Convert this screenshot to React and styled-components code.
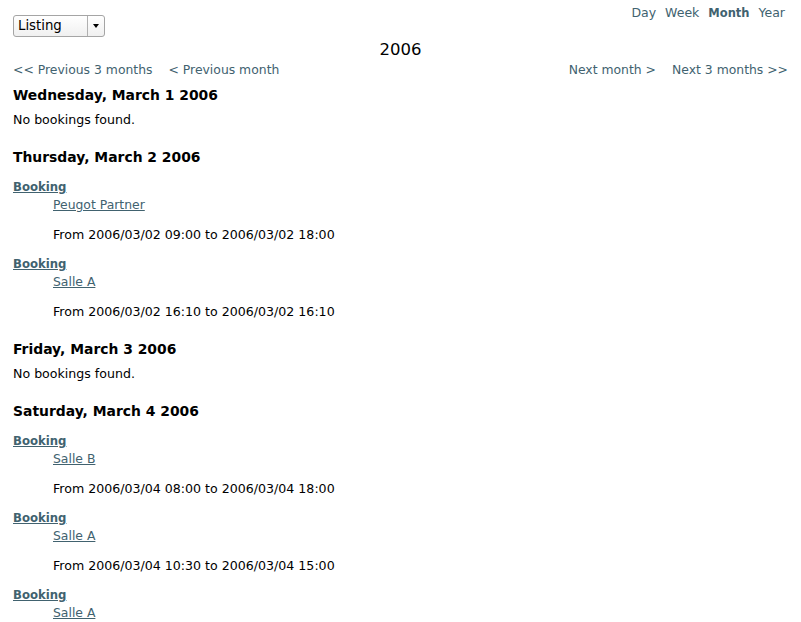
import React from "react";
import styled, { createGlobalStyle } from "styled-components";

const GlobalStyle = createGlobalStyle`
  body {
    margin: 0;
    background: #fff;
    font-family: "DejaVu Sans", Verdana, sans-serif;
    color: #000;
  }
`;

const days = [
  { title: "Wednesday, March 1 2006", bookings: [] },
  {
    title: "Thursday, March 2 2006",
    bookings: [
      { item: "Peugot Partner", from: "2006/03/02 09:00", to: "2006/03/02 18:00" },
      { item: "Salle A", from: "2006/03/02 16:10", to: "2006/03/02 16:10" },
    ],
  },
  { title: "Friday, March 3 2006", bookings: [] },
  {
    title: "Saturday, March 4 2006",
    bookings: [
      { item: "Salle B", from: "2006/03/04 08:00", to: "2006/03/04 18:00" },
      { item: "Salle A", from: "2006/03/04 10:30", to: "2006/03/04 15:00" },
      { item: "Salle A", from: "2006/03/04 16:00", to: "2006/03/04 18:00" },
    ],
  },
];

const App = () => {
  return (
    <Page>
      <GlobalStyle />
      <TopBar>
        <Select>
          <SelectLabel>Listing</SelectLabel>
          <SelectButton>
            <Arrow />
          </SelectButton>
        </Select>
        <ViewLinks>
          <ViewLink href="#">Day</ViewLink>
          <ViewLink href="#">Week</ViewLink>
          <ViewLink href="#" active>Month</ViewLink>
          <ViewLink href="#">Year</ViewLink>
        </ViewLinks>
      </TopBar>
      <Year>2006</Year>
      <NavRow>
        <NavGroup>
          <NavLink href="#">&lt;&lt; Previous 3 months</NavLink>
          <NavLink href="#">&lt; Previous month</NavLink>
        </NavGroup>
        <NavGroup>
          <NavLink href="#">Next month &gt;</NavLink>
          <NavLink href="#">Next 3 months &gt;&gt;</NavLink>
        </NavGroup>
      </NavRow>

      {days.map((day) => (
        <Day key={day.title}>
          <DayTitle>{day.title}</DayTitle>
          {day.bookings.length === 0 ? (
            <Empty>No bookings found.</Empty>
          ) : (
            day.bookings.map((b, i) => (
              <Booking key={i}>
                <BookingLink href="#">Booking</BookingLink>
                <Details>
                  <ItemLink href="#">{b.item}</ItemLink>
                  <Period>
                    From {b.from} to {b.to}
                  </Period>
                </Details>
              </Booking>
            ))
          )}
        </Day>
      ))}
    </Page>
  );
};

export default App;

const linkColor = "#41626f";

const Page = styled.div`
  padding: 5px 13px 20px 13px;
`;

const TopBar = styled.div`
  display: flex;
  justify-content: space-between;
  align-items: flex-start;
`;

const Select = styled.div`
  margin-top: 10px;
  width: 92px;
  height: 22px;
  box-sizing: border-box;
  display: flex;
  border: 1px solid #a5a5a5;
  border-radius: 3px;
  background: linear-gradient(#ffffff, #f0f0f0);
`;

const SelectLabel = styled.div`
  flex: 1;
  padding-left: 4px;
  font-size: 13.3px;
  line-height: 20px;
  color: #000;
`;

const SelectButton = styled.div`
  width: 16px;
  border-left: 1px solid #b0b0b0;
  display: flex;
  align-items: center;
  justify-content: center;
`;

const Arrow = styled.span`
  width: 0;
  height: 0;
  border-left: 3.5px solid transparent;
  border-right: 3.5px solid transparent;
  border-top: 4px solid #000;
`;

const ViewLinks = styled.div`
  display: flex;
  gap: 9px;
  padding-right: 3px;
`;

const ViewLink = styled.a`
  line-height: 16px;
  color: ${linkColor};
  text-decoration: none;
  font-weight: ${(p) => (p.active ? "bold" : "normal")};
  font-size: ${(p) => (p.active ? "11.5px" : "12.5px")};
`;

const Year = styled.div`
  margin-top: 3px;
  text-align: center;
  font-size: 16.5px;
  line-height: 20px;
`;

const NavRow = styled.div`
  display: flex;
  justify-content: space-between;
  margin-top: 1px;
  margin-bottom: 7px;
`;

const NavGroup = styled.div`
  display: flex;
  gap: 16px;
`;

const NavLink = styled.a`
  font-size: 12.4px;
  line-height: 18px;
  color: ${linkColor};
  text-decoration: none;
`;

const Day = styled.div`
  margin-bottom: 19px;
`;

const DayTitle = styled.h3`
  margin: 0;
  padding-bottom: 1px;
  font-size: 13.9px;
  line-height: 18px;
  font-weight: bold;
`;

const Empty = styled.p`
  margin: 6px 0 0 0;
  font-size: 12.6px;
  line-height: 18px;
`;

const Booking = styled.div`
  margin-top: 11px;
`;

const BookingLink = styled.a`
  display: block;
  width: max-content;
  font-size: 11.7px;
  line-height: 18px;
  font-weight: bold;
  color: ${linkColor};
`;

const Details = styled.div`
  padding-left: 40px;
`;

const ItemLink = styled.a`
  display: block;
  width: max-content;
  font-size: 12.4px;
  line-height: 18px;
  color: ${linkColor};
`;

const Period = styled.div`
  margin-top: 12px;
  font-size: 12.6px;
  line-height: 18px;
`;
